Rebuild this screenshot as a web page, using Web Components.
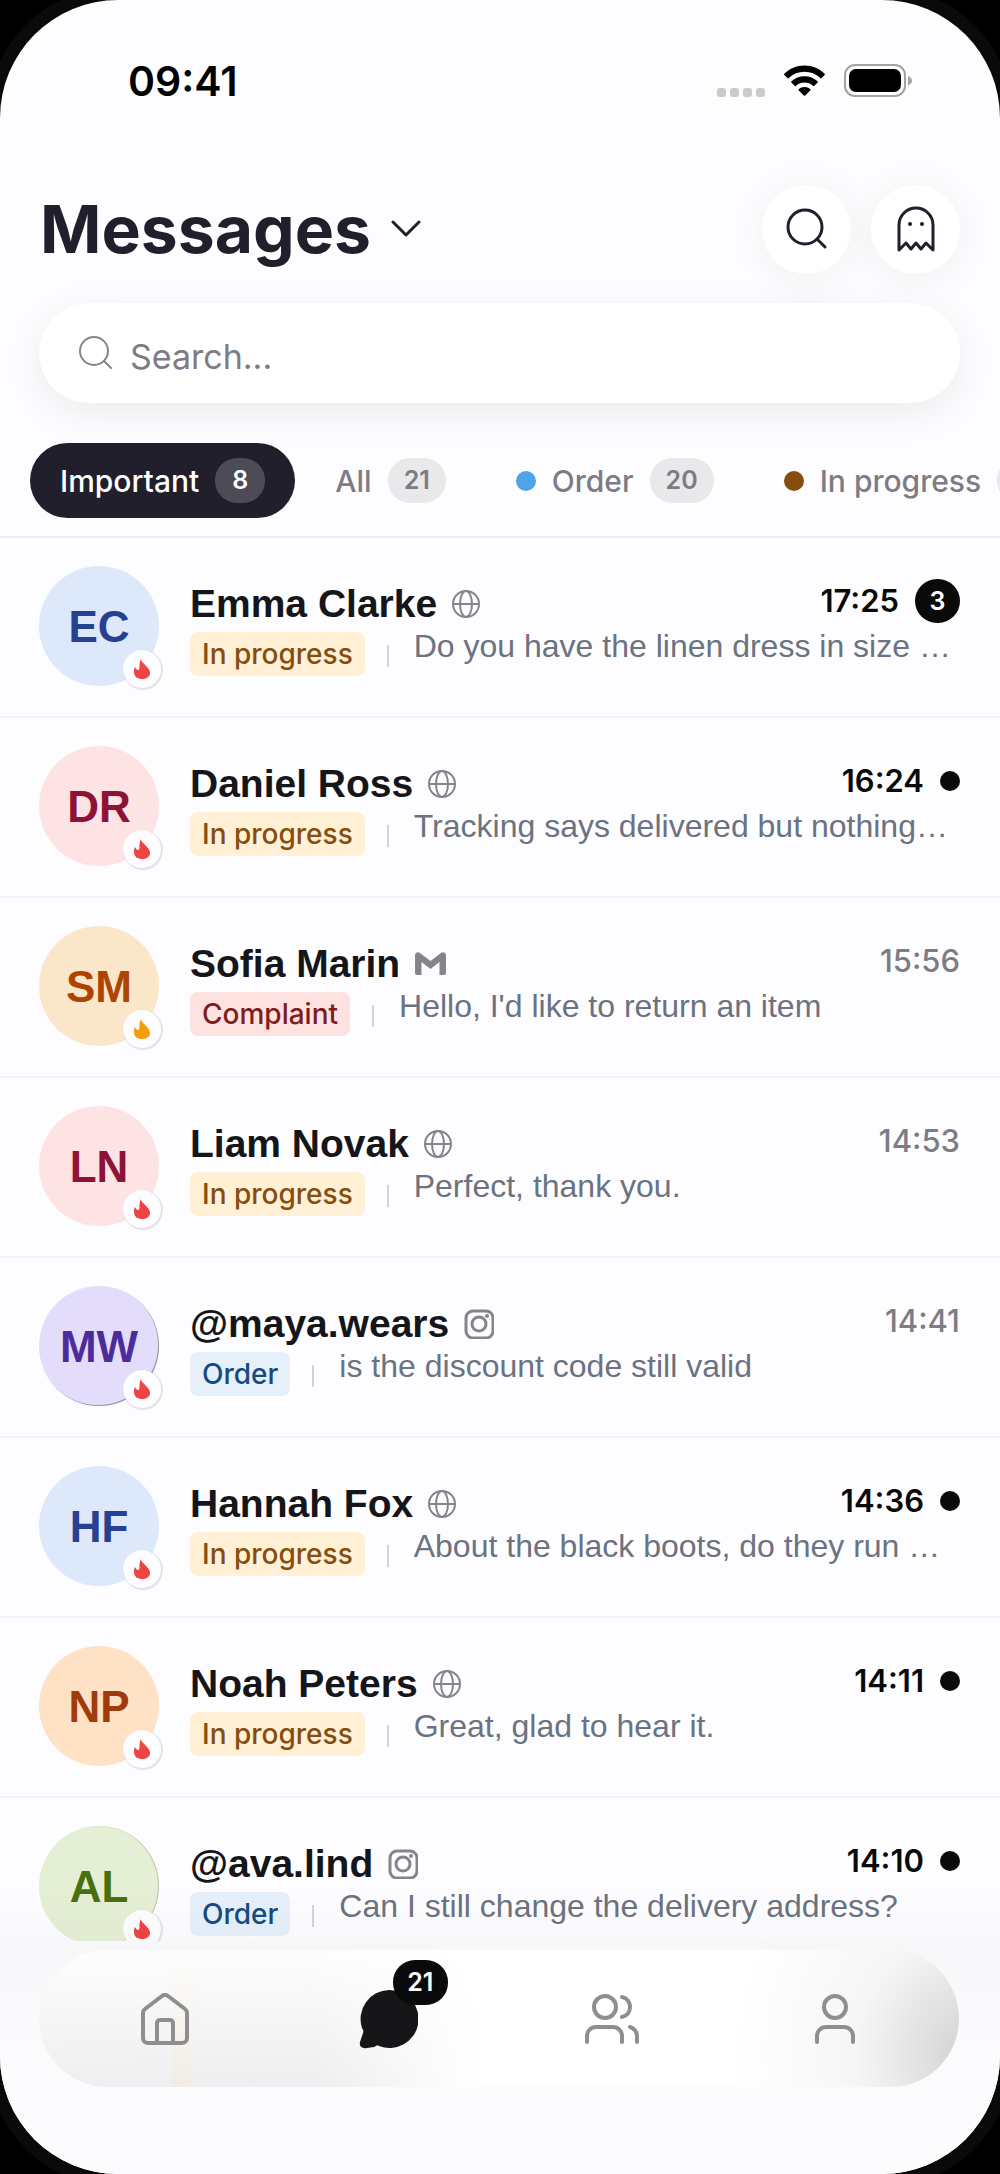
<!DOCTYPE html>
<html lang="en">
<head>
<meta charset="utf-8">
<meta name="viewport" content="width=device-width, initial-scale=1">
<title>Messages</title>
<style>
   html, body {
      margin: 0;
      height: 100%;
      background: #000;
      overflow: hidden;
   }
</style>
</head>
<body>

<phone-shell>
   <status-bar slot="status">09:41</status-bar>
   <inbox-header slot="header">
      Messages
      <filter-tab slot="tabs" count="8" selected>Important</filter-tab>
      <filter-tab slot="tabs" count="21">All</filter-tab>
      <filter-tab slot="tabs" count="20" dot="#4fa3e8">Order</filter-tab>
      <filter-tab slot="tabs" dot="#854d0e">In progress</filter-tab>
   </inbox-header>

   <message-row initials="EC" tone="blue" name="Emma Clarke" channel="globe" status="In progress" time="17:25" unread="3">Do you have the linen dress in size …</message-row>
   <message-row initials="DR" tone="rose" name="Daniel Ross" channel="globe" status="In progress" time="16:24" unread>Tracking says delivered but nothing…</message-row>
   <message-row initials="SM" tone="amber" name="Sofia Marin" channel="gmail" status="Complaint" time="15:56" flame="#f59e0b">Hello, I'd like to return an item</message-row>
   <message-row initials="LN" tone="rose" name="Liam Novak" channel="globe" status="In progress" time="14:53">Perfect, thank you.</message-row>
   <message-row initials="MW" tone="violet" name="@maya.wears" channel="instagram" status="Order" time="14:41">is the discount code still valid</message-row>
   <message-row initials="HF" tone="blue" name="Hannah Fox" channel="globe" status="In progress" time="14:36" unread>About the black boots, do they run …</message-row>
   <message-row initials="NP" tone="orange" name="Noah Peters" channel="globe" status="In progress" time="14:11" unread>Great, glad to hear it.</message-row>
   <message-row initials="AL" tone="green" name="@ava.lind" channel="instagram" status="Order" time="14:10" unread>Can I still change the delivery address?</message-row>

   <tab-bar slot="footer"></tab-bar>
</phone-shell>

<template id="phone-shell">
   <style>
      :host {
         display: flex;
         flex-direction: column;
         height: 100vh;
         overflow: hidden;
         border-radius: 118px;
         background: #fdfdff;
         box-shadow: 0 0 0 13px #0a0a0a;
         font-family: Inter, "Liberation Sans", sans-serif;
         color: #0a0a0a;
      }

      main {
         flex: 1;
         min-height: 0;
         overflow: hidden;
         position: relative;
      }

      /* The list darkens slightly before it meets the tab bar */
      main::after {
         content: "";
         position: absolute;
         left: 0;
         right: 0;
         bottom: 0;
         height: 60px;
         background: linear-gradient(rgba(20, 20, 60, 0), rgba(20, 20, 60, 0.02));
         pointer-events: none;
      }
   </style>
   <slot name="status"></slot>
   <slot name="header"></slot>
   <main><slot></slot></main>
   <slot name="footer"></slot>
</template>

<template id="status-bar">
   <style>
      :host {
         display: flex;
         justify-content: space-between;
         align-items: center;
         height: 162px;
         padding: 0 88px 0 128px;
         box-sizing: border-box;
         font-size: 41px;
         font-weight: 600;
         color: #000;
      }

      .signals {
         display: flex;
         align-items: center;
         gap: 19px;
      }

      svg { display: block; }
   </style>
   <slot></slot>
   <div class="signals">
      <svg width="48" height="32" viewBox="0 0 48 32" fill="#cacaca">
         <rect x="0" y="23" width="9" height="9" rx="3"/>
         <rect x="13" y="23" width="9" height="9" rx="3"/>
         <rect x="26" y="23" width="9" height="9" rx="3"/>
         <rect x="39" y="23" width="9" height="9" rx="3"/>
      </svg>
      <svg width="41" height="32" viewBox="0 0 41 32" fill="#000">
         <path d="M20.500 0.500C28.500 0.500 35.500 3.600 40.600 8.700a1 1 0 0 1 0 1.400l-3 3a1 1 0 0 1-1.400 0A22.500 22.500 0 0 0 20.500 6.800 22.500 22.500 0 0 0 4.800 13.100a1 1 0 0 1-1.400 0l-3-3a1 1 0 0 1 0-1.400C5.500 3.600 12.500.5 20.500.5Z"/>
         <path d="M20.500 11.200c5 0 9.600 1.900 13 5.100a1 1 0 0 1 0 1.400l-3.200 3.100a1 1 0 0 1-1.400 0 12.300 12.300 0 0 0-16.800 0 1 1 0 0 1-1.400 0l-3.200-3.100a1 1 0 0 1 0-1.400c3.400-3.200 8-5.100 13-5.100Z"/>
         <path d="M20.500 22c2.200 0 4.200.8 5.700 2.100a1 1 0 0 1 0 1.400l-5 5a1 1 0 0 1-1.400 0l-5-5a1 1 0 0 1 0-1.400C16.300 22.800 18.300 22 20.500 22Z"/>
      </svg>
      <svg width="68" height="34" viewBox="0 0 68 34">
         <rect x="1" y="1" width="60" height="31" rx="10" fill="none" stroke="#a3a3a3" stroke-width="2"/>
         <rect x="5" y="5" width="52" height="23" rx="7" fill="#000"/>
         <path d="M64 12c2.500 1 4 2.600 4 4.700s-1.500 3.700-4 4.700Z" fill="#a3a3a3"/>
      </svg>
   </div>
</template>

<template id="inbox-header">
   <style>
      :host {
         display: block;
         border-bottom: 2px solid #eeeef0;
         overflow: hidden;
         padding-bottom: 18px;
      }

      .title-bar {
         display: flex;
         align-items: center;
         gap: 20px;
         height: 90px;
         padding: 22px 40px 29px 40px;
      }

      h1 {
         flex: 1;
         margin: 0;
         font-size: 66px;
         line-height: 90px;
         font-weight: 700;
         color: #211f2b;
      }

      h1 button {
         display: flex;
         align-items: center;
         gap: 20px;
         padding: 0;
         border: 0;
         background: none;
         font: inherit;
         color: inherit;
      }

      .round {
         display: grid;
         place-items: center;
         width: 89px;
         height: 89px;
         padding: 0;
         border: 0;
         border-radius: 50%;
         background: #fff;
         color: #211f2b;
         box-shadow: 0 4px 40px rgba(0, 0, 0, 0.06);
      }

      .search {
         display: flex;
         align-items: center;
         gap: 18px;
         height: 100px;
         margin: 0 40px 40px 39px;
         padding: 0 40px;
         border-radius: 50px;
         background: #fff;
         color: #85848c;
         box-shadow: 0 10px 40px rgba(0, 0, 0, 0.07);
      }

      .search svg {
         display: block;
         margin-bottom: 2px;
      }

      input {
         flex: 1;
         min-width: 0;
         padding: 8px 0 0;
         border: 0;
         outline: 0;
         background: none;
         font: 400 34px/44px Inter, sans-serif;
         color: #211f2b;
      }

      input::placeholder {
         color: #7d7c84;
         opacity: 1;
      }

      nav {
         display: flex;
         gap: 10px;
         padding-left: 30px;
      }
   </style>
   <div class="title-bar">
      <h1><button type="button">
         <slot></slot>
         <svg width="30" height="18" viewBox="0 0 30 18" fill="none" stroke="currentColor" stroke-width="3" stroke-linecap="round" stroke-linejoin="round"><path d="M2 2l13 13L28 2"/></svg>
      </button></h1>
      <button class="round" type="button" aria-label="Search">
         <svg width="42" height="42" viewBox="0 0 42 42" fill="none" stroke="currentColor" stroke-width="3" stroke-linecap="round"><circle cx="19" cy="19" r="17"/><path d="M31 31l8 8"/></svg>
      </button>
      <button class="round" type="button" aria-label="Ghost mode">
         <svg width="38" height="46" viewBox="0 0 38 46" fill="none" stroke="currentColor" stroke-width="3" stroke-linejoin="round"><path d="M2 44V19a17 17 0 0 1 34 0v25l-7-7-5 6-5-6-5 6-5-6Z"/><circle cx="13" cy="18" r="2" fill="currentColor" stroke="none"/><circle cx="25" cy="18" r="2" fill="currentColor" stroke="none"/></svg>
      </button>
   </div>
   <label class="search">
      <svg width="33" height="33" viewBox="0 0 33 33" fill="none" stroke="currentColor" stroke-width="2" stroke-linecap="round"><circle cx="15" cy="15" r="14"/><path d="M25 25l7 7"/></svg>
      <input type="search" placeholder="Search..." aria-label="Search messages">
   </label>
   <nav><slot name="tabs"></slot></nav>
</template>

<template id="filter-tab">
   <style>
      :host {
         display: block;
         flex: none;
      }

      button {
         display: flex;
         align-items: center;
         gap: 16px;
         height: 75px;
         padding: 0 30px;
         border: 0;
         border-radius: 38px;
         background: none;
         font: 500 30px/36px Inter, sans-serif;
         color: #7d7c84;
      }

      .dot {
         width: 20px;
         height: 20px;
         border-radius: 50%;
      }

      .count {
         min-width: 18px;
         min-height: 45px;
         padding: 0 16px;
         border-radius: 22px;
         background: #e9e9eb;
         font-size: 25px;
         line-height: 45px;
         font-weight: 600;
         text-align: center;
      }

      :host([selected]) button {
         background: #211f2b;
         color: #fff;
      }

      :host([selected]) .count { background: #4d4b55; }
   </style>
   <button type="button"><slot></slot><span class="count"></span></button>
</template>

<template id="message-row">
   <style>
      :host {
         display: block;
         border-bottom: 2px solid #f3f3f5;
      }

      a {
         display: flex;
         gap: 31px;
         height: 178px;
         box-sizing: border-box;
         padding: 28px 40px 0 39px;
         font-family: "Liberation Sans", Arial, sans-serif;
         color: inherit;
         text-decoration: none;
      }

      .avatar {
         position: relative;
         flex: none;
         width: 120px;
         height: 120px;
         border-radius: 50%;
         font-size: 44px;
         line-height: 122px;
         font-weight: 700;
         text-align: center;
      }

      .blue { background: #dde9fa; color: #27408f; }
      .rose { background: #fee3e5; color: #8d1236; }
      .amber { background: #fae7ca; color: #ad4400; }
      .violet { background: #e3dcfa; color: #4c2c9c; box-shadow: inset -1px -1px 0 #9a97a6; }
      .orange { background: #ffe1c6; color: #a03c0c; }
      .green { background: #e5efd5; color: #49700f; box-shadow: inset -1px 0 0 #c3c2ae; }

      .heat {
         position: absolute;
         right: -2px;
         bottom: -2px;
         display: grid;
         place-items: center;
         width: 38px;
         height: 38px;
         border-radius: 50%;
         background: #fdfdff;
         box-shadow: 1px 1px 1px 1px rgba(0, 0, 0, 0.1);
      }

      .body {
         flex: 1;
         min-width: 0;
         padding-top: 16px;
      }

      .head, .meta, .line { display: flex; }

      .head {
         gap: 15px;
         height: 44px;
         margin-bottom: 2px;
      }

      .name {
         font-size: 39px;
         line-height: 44px;
         font-weight: 700;
         color: #15161a;
      }

      .channel {
         display: flex;
         align-items: center;
         color: #85848c;
      }

      .meta {
         align-items: center;
         gap: 16px;
         height: 38px;
         margin-left: auto;
         font: 500 31px/38px Inter, sans-serif;
         color: #7d7c84;
      }

      .meta.unread {
         font-weight: 600;
         color: #0a0a0a;
      }

      .meta i {
         width: 20px;
         height: 20px;
         border-radius: 50%;
         background: #0a0a0a;
      }

      .meta b {
         width: 45px;
         border-radius: 22px;
         background: #0a0a0a;
         color: #fff;
         font-size: 25px;
         line-height: 44px;
         font-weight: 600;
         text-align: center;
      }

      .status {
         margin: 4px 0 0;
         padding: 0 12px;
         border-radius: 8px;
         font: 500 28px/44px Inter, sans-serif;
         white-space: nowrap;
      }

      .in-progress { background: #fff0d6; color: #854d0e; }
      .complaint { background: #fee1e1; color: #7f1d1d; }
      .order { background: #e5f0fb; color: #164a80; }

      hr {
         flex: none;
         width: 2px;
         height: 22px;
         margin: 17px 25px 0 22px;
         border: 0;
         background: #d3d3d6;
      }

      .preview {
         flex: 1;
         min-width: 0;
         font-size: 32px;
         line-height: 37px;
         color: #6b7280;
         white-space: nowrap;
         overflow: hidden;
         text-overflow: ellipsis;
      }

      svg { display: block; }
   </style>
   <a href="#">
      <div class="avatar"></div>
      <div class="body">
         <div class="head"><span class="name"></span><span class="channel"></span><span class="meta"></span></div>
         <div class="line"><span class="status"></span><hr><span class="preview"><slot></slot></span></div>
      </div>
   </a>
</template>

<template id="tab-bar">
   <style>
      :host {
         display: block;
         padding: 9px 41px 87px 39px;
         background: linear-gradient(#f7f7f9, #fbfbfd 45%, #fcfcfe);
      }

      nav {
         display: flex;
         height: 137px;
         padding: 0 12px 0 14px;
         border-radius: 69px;
         background:
            radial-gradient(circle at 102% 75%, #cfcfcf, rgba(240, 240, 240, 0.6) 13%, rgba(255, 255, 255, 0) 26%),
            linear-gradient(rgba(255, 255, 255, 0.9), rgba(255, 255, 255, 0)),
            linear-gradient(90deg, rgba(244, 236, 224, 0) 134px, #f3ebdf 134px, rgba(244, 236, 224, 0) 165px),
            linear-gradient(90deg, #efeff1, #eeeef0 30%, #fff 48%);
      }

      a {
         flex: 1;
         display: grid;
         place-items: center;
         color: #8e8e8e;
      }

      .chat {
         position: relative;
         color: #161618;
      }

      .badge {
         position: absolute;
         left: -20px;
         right: -84px;
         top: 10px;
         margin: 0 auto;
         width: 55px;
         border-radius: 22px;
         background: #0a0a0a;
         color: #fff;
         font-size: 25px;
         line-height: 45px;
         font-weight: 600;
         text-align: center;
      }

      svg { display: block; }
   </style>
   <nav>
      <a href="#" aria-label="Home">
         <svg width="50" height="52" viewBox="0 0 50 52" fill="none" stroke="currentColor" stroke-width="4" stroke-linecap="round" stroke-linejoin="round"><path d="M22 3a5 5 0 0 1 6 0l17 13a5 5 0 0 1 2 4v25a5 5 0 0 1-5 5H8a5 5 0 0 1-5-5V20a5 5 0 0 1 2-4Z"/><path d="M17 50V30a3 3 0 0 1 3-3h10a3 3 0 0 1 3 3v20"/></svg>
      </a>
      <a href="#" class="chat" aria-label="Messages">
         <svg width="60" height="60" viewBox="0 0 60 60" fill="currentColor"><path d="M31 1a29 29 0 1 1-10 56c-2-1-3 0-5 1l-7 1c-5 1-8-2-7-6l3-9c1-2 0-3-1-5A29 29 0 0 1 31 1Z"/></svg>
         <span class="badge">21</span>
      </a>
      <a href="#" aria-label="Contacts">
         <svg width="54" height="50" viewBox="0 0 54 50" fill="none" stroke="currentColor" stroke-width="4" stroke-linecap="round"><circle cx="20" cy="13" r="11"/><path d="M2 48v-6a9 9 0 0 1 9-9h17a9 9 0 0 1 9 9v6M37 3c5 1 8 5 8 10s-3 9-8 10M45 33c4 1 7 5 7 9v6"/></svg>
      </a>
      <a href="#" aria-label="Profile">
         <svg width="40" height="50" viewBox="0 0 40 50" fill="none" stroke="currentColor" stroke-width="4" stroke-linecap="round"><circle cx="20" cy="13" r="11"/><path d="M2 48v-6a9 9 0 0 1 9-9h18a9 9 0 0 1 9 9v6"/></svg>
      </a>
   </nav>
</template>

<script>
   // Every element clones the template that has its own name
   class TemplateElement extends HTMLElement {
      constructor() {
         super()
         const template = document.querySelector('template#' + this.localName)
         this.attachShadow({ mode: 'open' }).appendChild(template.content.cloneNode(true))
      }

      find(selector) {
         return this.shadowRoot.querySelector(selector)
      }
   }

   const channelIcons = {
      globe: '<svg width="28" height="28" viewBox="0 0 28 28" fill="none" stroke="currentColor" stroke-width="2"><circle cx="14" cy="14" r="13"/><ellipse cx="14" cy="14" rx="6" ry="13"/><path d="M1 14h26"/></svg>',
      gmail: '<svg width="31" height="24" viewBox="0 0 31 24" fill="currentColor"><path d="M0 3a3 3 0 0 1 5-2l10.500 8L26 1a3 3 0 0 1 5 2v18a2 2 0 0 1-2 2h-4.500V10l-9 7-9-7v13H2a2 2 0 0 1-2-2Z"/></svg>',
      instagram: '<svg width="30" height="30" viewBox="0 0 30 30" fill="none" stroke="currentColor" stroke-width="3"><rect x="2" y="2" width="27" height="27" rx="7"/><circle cx="15" cy="15" r="7"/><circle cx="23" cy="7" r="2" fill="currentColor" stroke="none"/></svg>'
   }

   const flameIcon = '<svg width="16" height="20" viewBox="0 0 16 20"><path d="M7 0c0 3 3 4 6 8 2 2 3 4 3 6 0 4-4 6-8 6s-8-2-8-7c0-2 0-3 1-5 1 2 2 3 3 3 3 0 0-6 3-11Z"/></svg>'

   customElements.define('phone-shell', class extends TemplateElement { })
   customElements.define('status-bar', class extends TemplateElement { })
   customElements.define('inbox-header', class extends TemplateElement { })
   customElements.define('tab-bar', class extends TemplateElement { })

   customElements.define('filter-tab',
      class extends TemplateElement {
         connectedCallback() {
            this.find('.count').textContent = this.getAttribute('count')
            if (this.hasAttribute('dot')) {
               const dot = document.createElement('span')
               dot.className = 'dot'
               dot.style.background = this.getAttribute('dot')
               this.find('button').prepend(dot)
            }
         }
      }
   )

   customElements.define('message-row',
      class extends TemplateElement {
         connectedCallback() {
            const avatar = this.find('.avatar')
            avatar.classList.add(this.getAttribute('tone'))
            avatar.textContent = this.getAttribute('initials')

            const heat = document.createElement('span')
            heat.className = 'heat'
            heat.style.fill = this.getAttribute('flame') || '#ef4444'
            heat.innerHTML = flameIcon
            avatar.append(heat)

            this.find('.name').textContent = this.getAttribute('name')
            this.find('.channel').innerHTML = channelIcons[this.getAttribute('channel')]

            const status = this.find('.status')
            status.textContent = this.getAttribute('status')
            status.classList.add(status.textContent.toLowerCase().replace(' ', '-'))

            // An unread row gets a number, or only a dot when the number is left out
            const meta = this.find('.meta')
            meta.textContent = this.getAttribute('time')
            if (this.hasAttribute('unread')) {
               const count = this.getAttribute('unread')
               const mark = document.createElement(count ? 'b' : 'i')
               mark.textContent = count
               meta.classList.add('unread')
               meta.append(mark)
            }
         }
      }
   )
</script>
</body>
</html>
